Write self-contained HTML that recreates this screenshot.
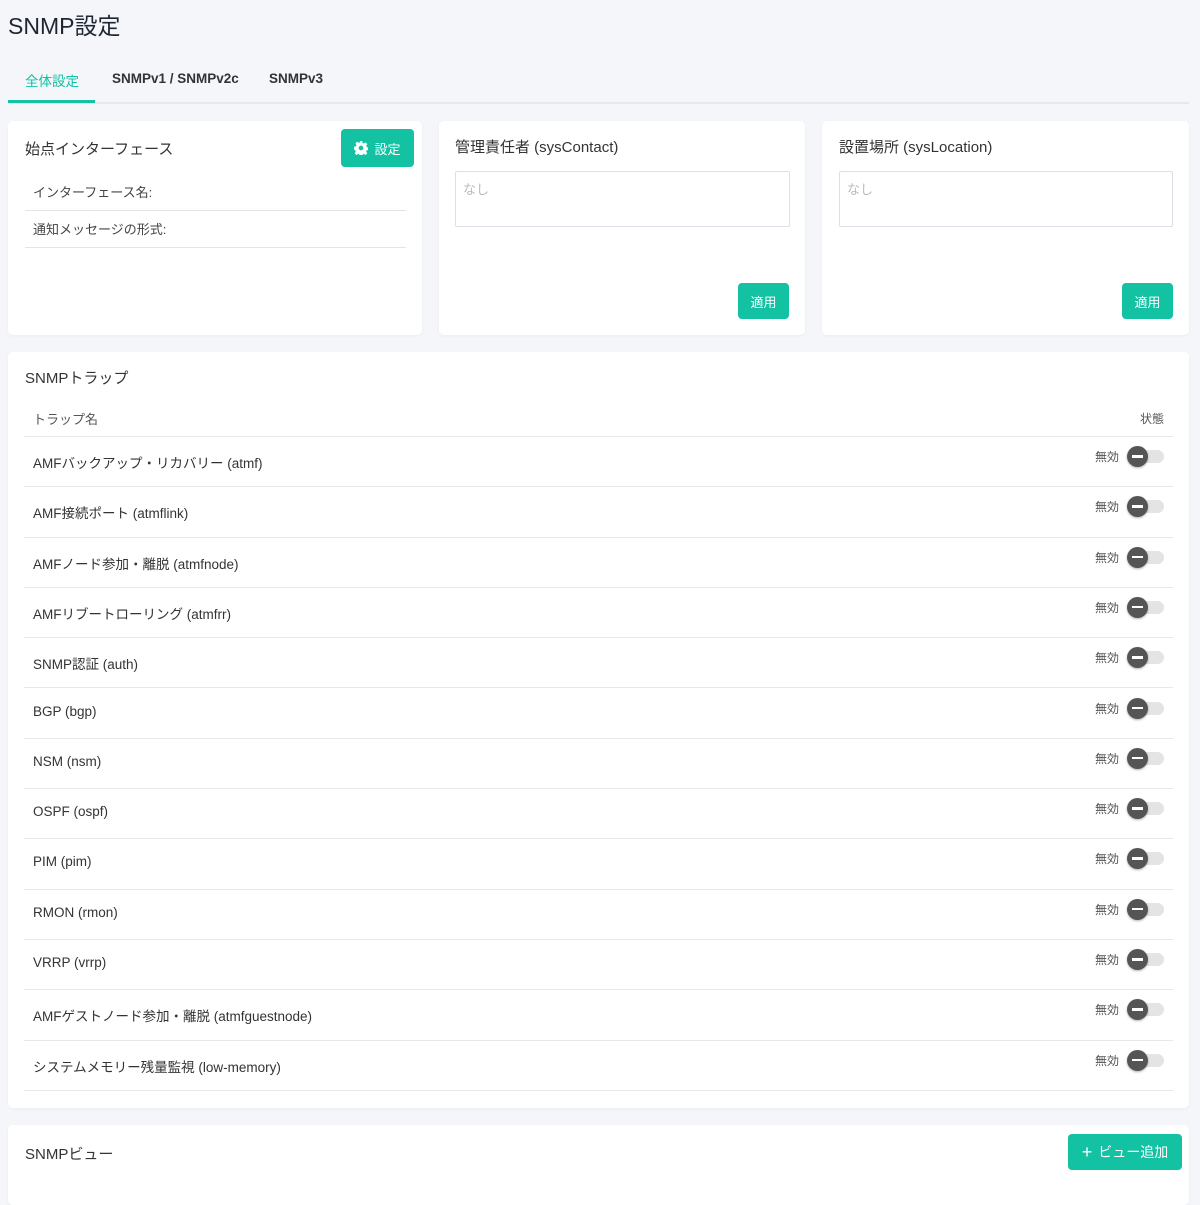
<!DOCTYPE html>
<html><head><meta charset="utf-8"><style>
*{box-sizing:border-box;margin:0;padding:0}
body{width:1200px;height:1179px;overflow:hidden;background:#f5f6fa;font-family:"Liberation Sans","Noto Sans CJK JP",sans-serif;color:#333;position:relative}
.abs{position:absolute}
h1{position:absolute;left:8px;top:7px;font-size:23px;font-weight:normal;color:#1f2633}
.tabs{position:absolute;left:8px;top:60px;width:1181px;height:44px;border-bottom:2px solid #e6e8ec}
.tab{position:absolute;top:11px;font-size:13.5px;font-weight:bold;color:#333}
.card{position:absolute;background:#fff;border-radius:5px;box-shadow:0 1px 3px rgba(0,0,0,.04)}
.btn{position:absolute;background:#13c1a3;color:#fff;border-radius:4px;font-size:13px;display:flex;align-items:center;justify-content:center}
.ttl{position:absolute;font-size:15px;color:#333}
.input{position:absolute;border:1px solid #dcdfe6;border-radius:2px;color:#bbb;font-size:13px;padding:7px 7px}
.row{position:absolute;left:16px;width:1149px;height:50.3px;border-bottom:1px solid #e8e8e8;font-size:13.5px;color:#333}
.row span.n{position:absolute;left:9px;top:15px}
.row span.s{position:absolute;right:54px;top:11px;font-size:12px;color:#555}
.sw{position:absolute;right:9px;top:13px;width:28px;height:13px;border-radius:7px;background:#e4e4e4}
.sw:before{content:"";position:absolute;left:-9px;top:-4px;width:21px;height:21px;border-radius:50%;background:#555;box-shadow:0 1px 2px rgba(0,0,0,.3)}
.sw:after{content:"";position:absolute;left:-4px;top:5px;width:11px;height:2.5px;background:#fff}
</style></head><body>
<h1>SNMP設定</h1>
<div class="tabs">
<div class="tab" style="left:17px;top:10px;color:#13c1a3;font-weight:normal">全体設定</div>
<div class="tab" style="left:104px">SNMPv1 / SNMPv2c</div>
<div class="tab" style="left:261px">SNMPv3</div>
<div class="abs" style="left:0;top:40px;width:87px;height:3px;background:#13c1a3"></div>
</div>

<div class="card" style="left:8px;top:121px;width:414px;height:214px">
<div class="ttl" style="left:17px;top:17px">始点インターフェース</div>
<div class="btn" style="left:333px;top:8px;width:73px;height:38px"><svg width="14" height="14" viewBox="0 0 16 16" style="margin-right:6px"><path fill="#fff" d="M6.6 0h2.8l.4 2.2 1.5.7 1.9-1.3 2 2-1.3 1.9.7 1.5 2.2.4v2.8l-2.2.4-.7 1.5 1.3 1.9-2 2-1.9-1.3-1.5.7-.4 2.2H6.6l-.4-2.2-1.5-.7-1.9 1.3-2-2 1.3-1.9-.7-1.5L0 9.4V6.6l2.2-.4.7-1.5-1.3-1.9 2-2 1.9 1.3 1.5-.7zM8 5.3A2.7 2.7 0 1 0 8 10.7 2.7 2.7 0 1 0 8 5.3z"/></svg>設定</div>
<div class="abs" style="left:17px;top:52px;width:381px;height:38px;border-bottom:1px solid #e4e4e4;font-size:13px;padding:9px 8px;color:#444">インターフェース名:</div>
<div class="abs" style="left:17px;top:90px;width:381px;height:37px;border-bottom:1px solid #e4e4e4;font-size:13px;padding:8px 8px;color:#444">通知メッセージの形式:</div>
</div>

<div class="card" style="left:439px;top:121px;width:366px;height:214px">
<div class="ttl" style="left:16px;top:15px">管理責任者 (sysContact)</div>
<div class="input" style="left:16px;top:50px;width:335px;height:56px">なし</div>
<div class="btn" style="left:299px;top:162px;width:51px;height:36px">適用</div>
</div>

<div class="card" style="left:822px;top:121px;width:367px;height:214px">
<div class="ttl" style="left:17px;top:15px">設置場所 (sysLocation)</div>
<div class="input" style="left:17px;top:50px;width:334px;height:56px">なし</div>
<div class="btn" style="left:300px;top:162px;width:51px;height:36px">適用</div>
</div>

<div class="card" style="left:8px;top:352px;width:1181px;height:756px">
<div class="ttl" style="left:17px;top:15px">SNMPトラップ</div>
<div class="row" style="top:50px;height:35px"><span class="n" style="top:7px;font-size:13px;color:#555">トラップ名</span><span style="position:absolute;right:9px;top:8px;font-size:12px;color:#555">状態</span></div>
<div class="row" style="top:85px"><span class="n">AMFバックアップ・リカバリー (atmf)</span><span class="s">無効</span><div class="sw"></div></div>
<div class="row" style="top:135.3px"><span class="n">AMF接続ポート (atmflink)</span><span class="s">無効</span><div class="sw"></div></div>
<div class="row" style="top:185.6px"><span class="n">AMFノード参加・離脱 (atmfnode)</span><span class="s">無効</span><div class="sw"></div></div>
<div class="row" style="top:235.9px"><span class="n">AMFリブートローリング (atmfrr)</span><span class="s">無効</span><div class="sw"></div></div>
<div class="row" style="top:286.2px"><span class="n">SNMP認証 (auth)</span><span class="s">無効</span><div class="sw"></div></div>
<div class="row" style="top:336.5px"><span class="n">BGP (bgp)</span><span class="s">無効</span><div class="sw"></div></div>
<div class="row" style="top:386.8px"><span class="n">NSM (nsm)</span><span class="s">無効</span><div class="sw"></div></div>
<div class="row" style="top:437.1px"><span class="n">OSPF (ospf)</span><span class="s">無効</span><div class="sw"></div></div>
<div class="row" style="top:487.4px"><span class="n">PIM (pim)</span><span class="s">無効</span><div class="sw"></div></div>
<div class="row" style="top:537.7px"><span class="n">RMON (rmon)</span><span class="s">無効</span><div class="sw"></div></div>
<div class="row" style="top:588px"><span class="n">VRRP (vrrp)</span><span class="s">無効</span><div class="sw"></div></div>
<div class="row" style="top:638.3px"><span class="n">AMFゲストノード参加・離脱 (atmfguestnode)</span><span class="s">無効</span><div class="sw"></div></div>
<div class="row" style="top:688.6px"><span class="n">システムメモリー残量監視 (low-memory)</span><span class="s">無効</span><div class="sw"></div></div>
</div>

<div class="card" style="left:8px;top:1125px;width:1181px;height:80px">
<div class="ttl" style="left:17px;top:18px">SNMPビュー</div>
<div class="btn" style="left:1060px;top:9px;width:114px;height:36px;font-size:14px"><span style="font-size:18px;margin-right:6px;line-height:1">+</span>ビュー追加</div>
</div>
</body></html>
